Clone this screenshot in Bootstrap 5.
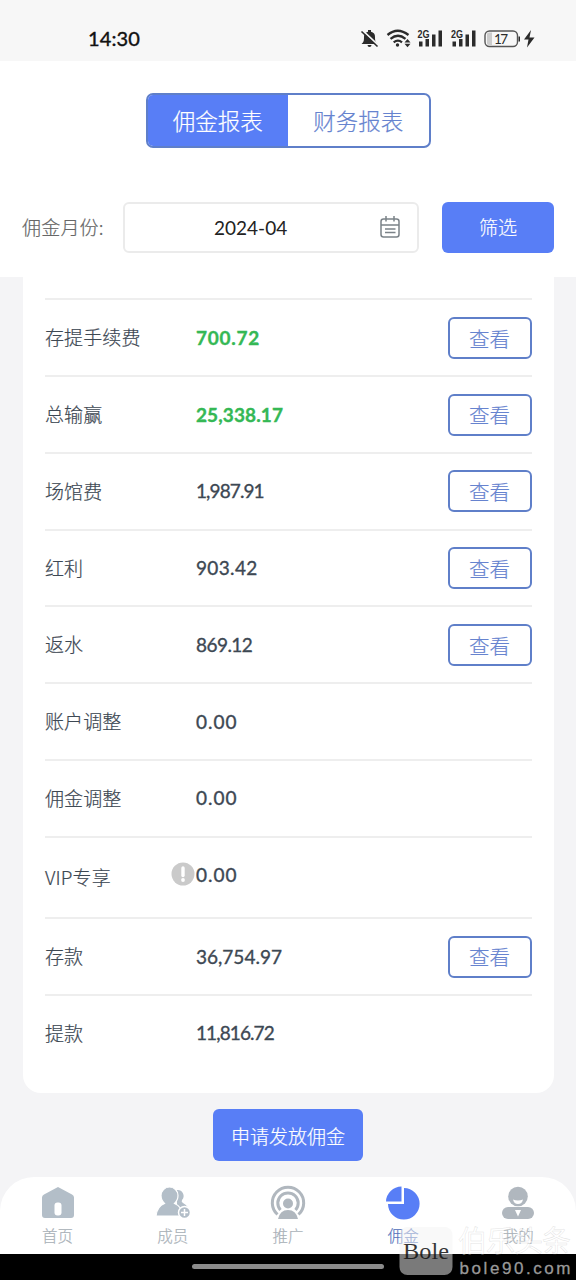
<!DOCTYPE html>
<html lang="zh-CN">
<head>
<meta charset="utf-8">
<meta name="viewport" content="width=device-width, initial-scale=1">
<title>佣金报表</title>
<link href="https://cdn.jsdelivr.net/npm/bootstrap@5.3.0/dist/css/bootstrap.min.css" rel="stylesheet">
<style>
:root{--blue:#587ef6;--line:#5f7fc9}
body{font-family:"Noto Sans CJK SC",sans-serif;font-weight:300;background:#f4f4f6;width:576px;height:1280px;overflow:hidden;color:#3d4853;font-size:19px;line-height:1.2;-webkit-text-stroke:.2px currentColor}
.statusbar{height:61px;background:#f7f7f7;padding:16px 40px 0 88px}
.statusbar svg{margin-top:10.500px;-webkit-text-stroke:0}
.clock{font:400 20px/45px Lato,sans-serif;color:#111;letter-spacing:.1px;-webkit-text-stroke:.4px #111}
.topbox{height:216px;background:#fff;padding-top:32px}
.seg{width:285px;height:55px;border:2px solid var(--line);border-radius:7px;overflow:hidden;font-size:22.5px}
.seg>div{color:#6683cf}
.seg>div.on{background:var(--blue);color:#fff}
.filters{margin-top:53px;padding:0 22px;height:52px}
.flabel{width:101px;color:#666;font-size:19px;letter-spacing:.2px}
.monthbox{width:296px;height:51px;border:2px solid #ebebeb;border-radius:6px;padding:0 17px 0 89px;color:#222}
.num{font-family:Lato,sans-serif;font-weight:400;-webkit-text-stroke:0;padding-top:2px}
.btn.solid{background:var(--blue);color:#fff;border:0;border-radius:6px;font-size:19px;font-weight:300;padding:0}
.sheet{margin:0 22px 0 22.5px;height:816px;background:#fff;border-radius:0 0 18px 18px;padding:21.4px 22.5px 0 22.5px}
.item{height:76.75px;border-top:2px solid #eee}
.item.tall{height:81.5px}
.item .k{width:151px;position:relative;letter-spacing:.1px}
.item .v{font:400 19px/24px Lato,sans-serif;-webkit-text-stroke:.35px currentColor}
.item .v.win{color:#35b855;font-weight:700;letter-spacing:.1px}
.item.tall .v{margin-top:-5px}
.item .v.zero{letter-spacing:1px}
.item .v.snug{letter-spacing:-.9px}
.item .v.trim{letter-spacing:-.55px}
.item .v.win.loose{letter-spacing:.75px}
.btn.look{width:84px;height:42px;border:2px solid var(--line);border-radius:6px;color:#6683cf;font-size:20.5px;font-weight:300;padding:0;line-height:1}
.info{position:absolute;right:1px;top:-4px}
.sendbtn{width:150px;height:52px;margin-top:16px;padding-top:2px!important}
.tabs{position:relative;margin-top:16px;height:77px;background:#fff;border-radius:34px 34px 0 0;font-size:15.5px;color:#a9b1b8}
.tabs>div{width:20%;padding-top:8px}
.tabs svg{display:block;margin-bottom:5px}
.tabs .on{color:#5674bd}
.homebar{background:#000;height:27px;padding-top:10px}
.homebar i{width:192px;height:5px;border-radius:3px;background:#8b8b8b}
.wm{position:absolute;left:399px;top:1222px;width:177px;height:58px;-webkit-text-stroke:0}
</style>
<script src="https://cdn.jsdelivr.net/npm/bootstrap@5.3.0/dist/js/bootstrap.bundle.min.js"></script>
</head>
<body>
<header class="statusbar d-flex justify-content-between">
  <span class="clock">14:30</span>
  <svg width="176" height="24" viewBox="360 27 176 24" fill="#2b2b2b">
    <path d="M361.500 44c2.500-2 2.500-4 2.500-7a5.300 5.300 0 0 1 4-5.300v-1.700h3v1.700a5.300 5.300 0 0 1 4 5.300c0 3 0 5 2.500 7zM367.500 45h4a2 2 0 0 1-4 0z"/>
    <path d="M362.500 30.500l16 15" stroke="#f7f7f7" stroke-width="1.800"/><path d="M361.500 31.500l16 15" stroke="#2b2b2b" stroke-width="1.700"/>
    <g fill="none" stroke="#2b2b2b" stroke-width="2.300"><path d="M387.500 35q10-8.500 21 0M390.500 38.800q7.500-6 15 0M393.700 42.300q4.300-3.300 8.300 0"/></g>
    <circle cx="397.500" cy="45" r="1.700"/><path d="M404.500 42.500l3-3.500 3 3.500zM404.500 43.700l3 3.500 3-3.500z"/>
    <g id="sig"><text x="417.500" y="37.500" font-family="Liberation Sans" font-weight="700" font-size="10" textLength="12" lengthAdjust="spacingAndGlyphs">2G</text>
    <path d="M419 41.500h3.500V46.500H419zM425.500 39h3.500v7.500h-3.500zM432 34.500h3.500v12H432zM438.500 30.500h3.500v16h-3.500z"/></g>
    <use href="#sig" x="33.500"/>
    <rect x="485" y="31" width="32.500" height="15.500" rx="4.500" fill="none" stroke="#555" stroke-width="1.400"/><path d="M487 34q0-1.500 2-1.500h3v12.500h-3q-2 0-2-1.500z" fill="#ccc"/><path d="M518.500 36.500h1.500v5h-1.500z"/>
    <text x="494" y="43.500" font-family="Lato" font-weight="400" font-size="13.500" textLength="14">17</text>
    <path d="M531 30l-7 9.500h4.500L527 47.500l7.500-10h-5z"/>
  </svg>
</header>
<section class="topbox">
  <div class="seg d-flex mx-auto">
    <div class="on w-50 d-flex align-items-center justify-content-center">佣金报表</div>
    <div class="w-50 d-flex align-items-center justify-content-center">财务报表</div>
  </div>
  <div class="filters d-flex align-items-center">
    <span class="flabel">佣金月份:</span>
    <div class="monthbox d-flex align-items-center justify-content-between">
      <span class="num">2024-04</span>
      <svg width="20" height="22" viewBox="0 0 20 22" fill="none" stroke="#7b8288" stroke-width="1.500"><rect x="1" y="3" width="18" height="18" rx="2.500"/><path d="M1 9h18M6 0v5.500M14 0v5.500M5 13h10.500M5 16.500h10.500"/></svg>
    </div>
    <button class="btn solid ms-auto" style="width:112px;height:51px">筛选</button>
  </div>
</section>
<main class="sheet">
  <div class="item d-flex align-items-center"><span class="k">存提手续费</span><span class="v win loose">700.72</span><button class="btn look ms-auto">查看</button></div>
  <div class="item d-flex align-items-center"><span class="k">总输赢</span><span class="v win">25,338.17</span><button class="btn look ms-auto">查看</button></div>
  <div class="item d-flex align-items-center"><span class="k">场馆费</span><span class="v snug">1,987.91</span><button class="btn look ms-auto">查看</button></div>
  <div class="item d-flex align-items-center"><span class="k">红利</span><span class="v" style="letter-spacing:.35px">903.42</span><button class="btn look ms-auto">查看</button></div>
  <div class="item d-flex align-items-center"><span class="k">返水</span><span class="v trim">869.12</span><button class="btn look ms-auto">查看</button></div>
  <div class="item d-flex align-items-center"><span class="k">账户调整</span><span class="v zero">0.00</span></div>
  <div class="item d-flex align-items-center"><span class="k">佣金调整</span><span class="v zero">0.00</span></div>
  <div class="item tall d-flex align-items-center"><span class="k">VIP专享<svg class="info" width="24" height="24" viewBox="0 0 24 24"><circle cx="12" cy="12" r="11.500" fill="#cacaca"/><path d="M12 6v7.500" stroke="#fff" stroke-width="3.400" stroke-linecap="round"/><circle cx="12" cy="18" r="1.900" fill="#fff"/></svg></span><span class="v zero">0.00</span></div>
  <div class="item d-flex align-items-center"><span class="k">存款</span><span class="v">36,754.97</span><button class="btn look ms-auto">查看</button></div>
  <div class="item d-flex align-items-center"><span class="k">提款</span><span class="v snug">11,816.72</span></div>
</main>
<div class="text-center"><button class="btn solid sendbtn">申请发放佣金</button></div>
<nav class="tabs d-flex">
  <div class="d-flex flex-column align-items-center">
    <svg width="36" height="36" viewBox="0 0 36 36"><path d="M18 2l14 7.500q2 1 2 3V30q0 3-3 3H5q-3 0-3-3V12.500q0-2 2-3z" fill="#b3bec8"/><rect x="14.500" y="17.500" width="7" height="13" rx="3" fill="#fff"/></svg>首页</div>
  <div class="d-flex flex-column align-items-center">
    <svg width="36" height="36" viewBox="0 0 36 36" fill="#b3bec8"><path d="M22 5a6 6 0 0 1 5 10q-1 2 1 3 5 3 6 7H22z"/><path d="M1 31q1-9.500 8.500-12.500Q6 15 6 10.500a8.500 8.500 0 0 1 17 0Q23 15 19.500 18.500 27 21.500 28 31z" stroke="#fff" stroke-width="1.200"/><circle cx="29.500" cy="27.500" r="6" stroke="#fff" stroke-width="1.500"/><path d="M26 27.500h7M29.500 24v7" stroke="#fff" stroke-width="1.500"/></svg>成员</div>
  <div class="d-flex flex-column align-items-center">
    <svg width="36" height="36" viewBox="0 0 36 36" fill="none" stroke="#b0b7be" stroke-width="3"><path d="M7.500 29.500a15.700 15.700 0 1 1 21 0M10.500 25a10.200 10.200 0 1 1 15 0"/><g fill="#b0b7be" stroke="none"><circle cx="18" cy="18.500" r="5"/><path d="M8 34q2-9 10-9t10 9z"/></g></svg>推广</div>
  <div class="on d-flex flex-column align-items-center">
    <svg width="36" height="36" viewBox="0 0 36 36" fill="#587ef6"><path d="M19 3A15.800 15.800 0 1 1 3 19H19z"/><path d="M16.500 1.500v15H1A16 15.500 0 0 1 16.500 1.500z"/></svg>佣金</div>
  <div class="d-flex flex-column align-items-center">
    <svg width="36" height="36" viewBox="0 0 36 36" fill="#b0b7be"><circle cx="18" cy="11.500" r="9.800"/><rect x="2" y="22" width="32" height="12" rx="6"/><path d="M13 14.500q5 2 10 0-1 4.500-5 4.500t-5-4.500z" fill="#fff"/><path d="M15 25h6l-3 6.500z" fill="#fff"/></svg>我的</div>
</nav>
<footer class="homebar d-flex justify-content-center align-items-start"><i></i></footer>
<svg class="wm" viewBox="399 1222 177 58">
  <rect x="399.500" y="1227" width="53" height="48" rx="8" fill="#f4f4f4" fill-opacity=".5"/>
  <text x="403" y="1259" font-family="Liberation Serif" font-weight="400" font-size="23" textLength="46" lengthAdjust="spacingAndGlyphs" fill="#111" fill-opacity=".85">Bole</text>
  <text x="458" y="1252" font-family="Noto Sans CJK SC" font-weight="400" font-size="29" textLength="113" fill="#fff" fill-opacity=".5" stroke="#aaa" stroke-opacity=".35" stroke-width=".5">伯乐头条</text>
  <text x="459.500" y="1274" font-family="Liberation Sans" font-weight="400" font-size="17" textLength="111" fill="#999" stroke="#999" stroke-width=".3">bole90.com</text>
</svg>
</body>
</html>
